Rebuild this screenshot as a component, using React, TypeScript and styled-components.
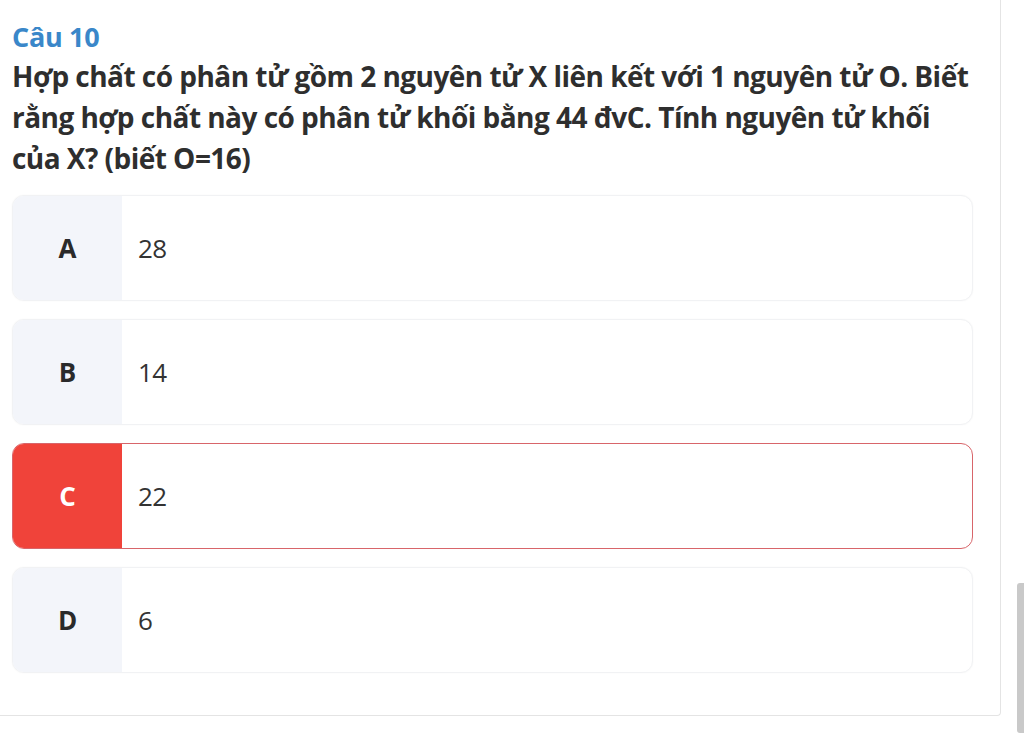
import styled, { createGlobalStyle } from "styled-components";

const Global = createGlobalStyle`
  html, body {
    margin: 0;
    padding: 0;
    background: #ffffff;
    font-family: "Open Sans", "Noto Sans", sans-serif;
  }
`;

const Page = styled.div`
  width: 1024px;
  height: 742px;
  overflow: hidden;
  position: relative;
  box-sizing: border-box;
  padding-right: 23px;
`;

const Card = styled.div`
  box-sizing: border-box;
  width: 1001px;
  background: #fff;
  border: 1px solid #e4e4e4;
  border-left: none;
  border-top: none;
  border-bottom-right-radius: 4px;
  padding: 20px 27px 42px 12px;
`;

const Title = styled.div`
  color: #3a87c9;
  font-size: 27px;
  font-weight: 700;
  line-height: 34px;
  letter-spacing: -0.3px;
`;

const Question = styled.div`
  color: #2e2e2e;
  font-size: 28px;
  font-weight: 700;
  line-height: 41px;
  margin-top: 2px;
  margin-bottom: 16px;
  letter-spacing: -0.53px;
`;

const Options = styled.div`
  display: flex;
  flex-direction: column;
  gap: 18px;
`;

const Option = styled.div<{ $wrong?: boolean }>`
  display: flex;
  height: 106px;
  box-sizing: border-box;
  border: 1px solid ${(p) => (p.$wrong ? "#d8656a" : "#f1f2f4")};
  border-radius: 12px;
  overflow: hidden;
  background: #fff;
  box-shadow: ${(p) => (p.$wrong ? "none" : "0 0 2px rgba(0, 0, 0, 0.04)")};
`;

const Letter = styled.div<{ $wrong?: boolean }>`
  width: 109px;
  flex: none;
  display: flex;
  align-items: center;
  justify-content: center;
  background: ${(p) => (p.$wrong ? "#f0433a" : "#f3f5fa")};
  color: ${(p) => (p.$wrong ? "#fff" : "#2a2a2a")};
  font-size: 26px;
  font-weight: 700;
`;

const Value = styled.div`
  display: flex;
  align-items: center;
  padding-left: 16px;
  color: #333;
  font-size: 26px;
  font-weight: 400;
  letter-spacing: -0.5px;
`;

const ScrollThumb = styled.div`
  position: absolute;
  right: 0;
  top: 583px;
  width: 7px;
  height: 150px;
  background: #c9c9c9;
  border-radius: 3px 0 0 3px;
`;

const options = [
  { key: "A", value: "28" },
  { key: "B", value: "14" },
  { key: "C", value: "22", wrong: true },
  { key: "D", value: "6" },
];

export default function App() {
  return (
    <Page>
      <Global />
      <Card>
        <Title>Câu 10</Title>
        <Question>
          Hợp chất có phân tử gồm 2 nguyên tử X liên kết với 1 nguyên tử O. Biết rằng hợp chất này có phân tử khối bằng 44 đvC. Tính nguyên tử khối của X? (biết O=16)
        </Question>
        <Options>
          {options.map((o) => (
            <Option key={o.key} $wrong={o.wrong}>
              <Letter $wrong={o.wrong}>{o.key}</Letter>
              <Value>{o.value}</Value>
            </Option>
          ))}
        </Options>
      </Card>
      <ScrollThumb />
    </Page>
  );
}
